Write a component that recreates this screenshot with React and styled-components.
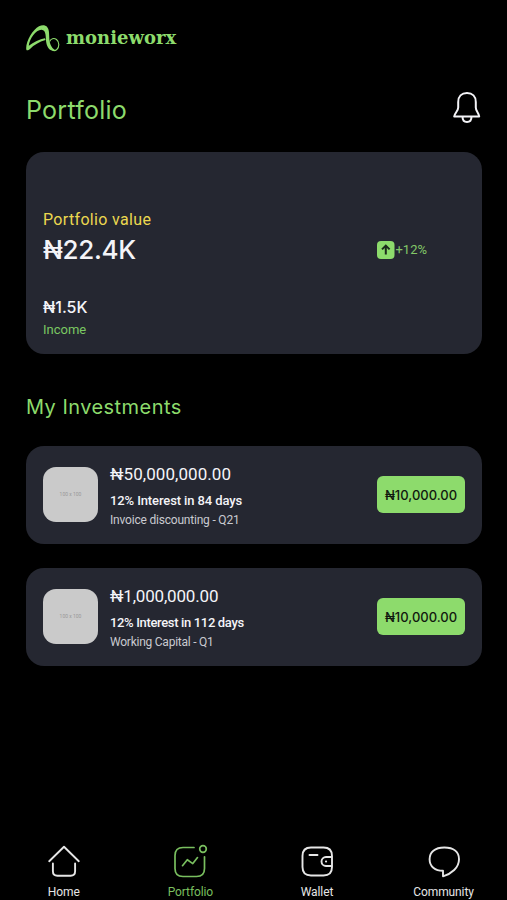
import React from "react";
import styled, { createGlobalStyle } from "styled-components";

const GREEN = "#8ddb6c";
const PANEL = "#252731";

const GlobalStyle = createGlobalStyle`
  * { box-sizing: border-box; }
  body { margin: 0; background: #000; font-family: Roboto, "Noto Sans", sans-serif; }
`;

const Screen = styled.main`
  display: flex;
  flex-direction: column;
  width: 507px;
  height: 900px;
  overflow: hidden;
  padding: 0 25px 0 26px;
  background: #000;
  color: #f4f4f8;
`;

const Text = styled.span`
  display: block;
  white-space: nowrap;
  color: ${(p) => p.$color || "inherit"};
  font-family: ${(p) => (p.$round ? 'Inter, sans-serif' : 'Roboto, "Noto Sans", sans-serif')};
  font-size: ${(p) => p.$size}px;
  font-weight: ${(p) => p.$weight || 400};
  line-height: ${(p) => p.$line}px;
  letter-spacing: ${(p) => p.$track || 0}px;
`;

const Brand = styled.header`
  display: flex;
  gap: 6px;
  height: 52px;
  padding-top: 24px;
  color: ${GREEN};
  svg { display: block; }
`;

const BrandName = styled.span`
  font: 700 18px/27px "DejaVu Serif", serif;
`;

const TitleRow = styled.div`
  display: flex;
  justify-content: space-between;
  height: 100px;
  padding-top: 38px;
`;

const Summary = styled.section`
  display: flex;
  justify-content: space-between;
  flex: none;
  height: 202px;
  padding: 57px 55px 0 17px;
  border-radius: 18px;
  background: ${PANEL};
`;

const Income = styled.div`
  padding-top: 27px;
`;

const Change = styled.div`
  display: flex;
  align-items: center;
  height: 20px;
  margin-top: 31px;
  svg { display: block; }
`;

const SectionTitle = styled.div`
  padding: 39px 0 24px;
`;

const List = styled.div`
  display: flex;
  flex-direction: column;
  gap: 24.5px;
`;

const Row = styled.article`
  display: flex;
  align-items: center;
  height: 97.5px;
  padding: 0 17px;
  border-radius: 18px;
  background: ${PANEL};
`;

const Thumb = styled.div`
  display: grid;
  place-items: center;
  width: 55px;
  height: 55px;
  margin-right: 12px;
  border-radius: 13px;
  background: #cacaca;
`;

const Details = styled.div`
  flex: 1;
  padding-bottom: 2px;
`;

const Amount = styled.button`
  display: grid;
  place-items: center;
  width: 88px;
  height: 37px;
  padding: 0;
  border: 0;
  border-radius: 6px;
  background: ${GREEN};
  color: #11180f;
`;

const Nav = styled.nav`
  display: grid;
  grid-template-columns: repeat(4, 126.6px);
  margin: auto -25px 0 -25.5px;
  height: 56px;
`;

const Tab = styled.a`
  display: flex;
  flex-direction: column;
  align-items: center;
  gap: 2px;
  color: ${(p) => (p.$active ? "#79bf5f" : "#e6e6e6")};
  svg { display: block; flex: none; }
`;

const Stroke = ({ w, h, children, sw = 1.9 }) => (
  <svg width={w} height={h} viewBox={`0 0 ${w} ${h}`} fill="none" stroke="currentColor" strokeWidth={sw} strokeLinecap="round" strokeLinejoin="round">
    {children}
  </svg>
);

const LogoMark = () => (
  <svg width="34" height="28" viewBox="0 0 34 28" fill="none">
    <path fill="currentColor" d="M.3 25.500C-.8 18.500 6.500 5.500 13 2.200C18 0 22.200 1.500 22.900 7.500C23.500 13.500 22.800 18 25.500 22.500C26.600 24.600 28.500 26 30.300 26.500C25.500 28.300 21.300 24.800 20.300 18.800C19.500 13.500 20.500 6 15.500 5.800C10 5.600 3.300 15 2.800 21.800C7.500 17.900 13.600 15 19 14.200L19.500 16C13.200 17.800 8 21 4 24.900C2.500 26.400.6 27 .3 25.500Z" />
    <path stroke="currentColor" strokeWidth="1.100" d="M23.800 17.500C24.500 14.500 28 13.700 30.500 15.500C33.600 18 33.500 23 30.800 25.500C29.500 26.700 28 26.900 26.500 26.300" />
  </svg>
);

const HomeIcon = () => (
  <Stroke w={36} h={36}>
    <path d="M3.200 17.200L18 2.800L32.800 17.200M6.900 19.500V27.300Q6.900 31.800 11.400 31.800H24.600Q29.100 31.800 29.100 27.300V19.500" />
  </Stroke>
);
const PortfolioIcon = () => (
  <Stroke w={36} h={36} sw={1.7}>
    <path d="M22 3.500H11Q3 3.500 3 11.500V24.500Q3 32.500 11 32.500H24.500Q32.500 32.500 32.500 24.500V12.800M10.500 21.700L15.300 15.700L20.800 19.600L25.500 13.600" />
    <circle cx="31" cy="5" r="3.300" />
  </Stroke>
);
const WalletIcon = () => (
  <Stroke w={36} h={36}>
    <path d="M33 13V12Q33 3.500 24.500 3.500H12Q3.500 3.500 3.500 12V23Q3.500 31.500 12 31.500H24.500Q33 31.500 33 23V22M33 13H27A4.500 4.500 0 0 0 27 22H33ZM10.500 11H18.500M26.900 17.500H27.200" />
  </Stroke>
);
const CommunityIcon = () => (
  <Stroke w={36} h={36}>
    <path d="M17 32.300V26.800C9 26.800 3.600 22.500 3.600 15.200C3.600 8.200 8.800 3.500 18.300 3.500C28 3.500 33 8.300 33 15.200C33 23.700 25.500 29.800 17 32.300Z" />
  </Stroke>
);

const BellIcon = () => (
  <Stroke w={30} h={36} sw={2}>
    <path d="M6.200 12C6.200 6.500 9.500 3 15 3S23.800 6.500 23.800 12V17.500C23.800 21 26.500 22.500 27.200 26.500H2.200C3 22.500 6.200 21 6.200 17.500ZM10.500 26.800C10.500 30.300 12.300 32 15 32S19.500 30.300 19.500 26.800" />
  </Stroke>
);

const investments = [
  { total: "₦50,000,000.00", terms: "12% Interest in 84 days", kind: "Invoice discounting - Q21", tt: 0.06, it: -0.11, kt: -0.2 },
  { total: "₦1,000,000.00", terms: "12% Interest in 112 days", kind: "Working Capital - Q1", tt: -0.18, it: -0.34, kt: -0.24 },
];

const tabs = [
  { label: "Home", Icon: HomeIcon },
  { label: "Portfolio", Icon: PortfolioIcon, active: true },
  { label: "Wallet", Icon: WalletIcon },
  { label: "Community", Icon: CommunityIcon },
];

export default function App() {
  return (
    <>
      <GlobalStyle />
      <Screen>
        <Brand>
          <LogoMark />
          <BrandName>monieworx</BrandName>
        </Brand>
        <TitleRow>
          <Text $round $size={25} $line={40} $track={0.25} $color={GREEN}>Portfolio</Text>
          <BellIcon />
        </TitleRow>
        <Summary>
          <div>
            <Text $size={16} $line={22} $track={0.33} $color="#ecd84f">Portfolio value</Text>
            <Text $round $size={26} $line={38} $weight={500} $track={-0.35}>₦22.4K</Text>
            <Income>
              <Text $round $size={16} $line={22} $weight={500}>₦1.5K</Text>
              <Text $size={13} $line={24} $color="#7bc862">Income</Text>
            </Income>
          </div>
          <Change>
            <svg width="18" height="18" viewBox="0 0 18 18" fill="none">
              <rect width="17.500" height="18" rx="4" fill={GREEN} />
              <path d="M8.800 13.500V5M5 8.400L8.800 4.600L12.600 8.400" stroke="#1c2a1c" strokeWidth="2" />
            </svg>
            <Text $size={13} $line={20} $color="#83c868">+12%</Text>
          </Change>
        </Summary>
        <SectionTitle>
          <Text $round $size={20} $line={29} $track={0.45} $color={GREEN}>My Investments</Text>
        </SectionTitle>
        <List>
          {investments.map((item) => (
            <Row key={item.total}>
              <Thumb><Text $size={5} $line={7} $color="#999">100 x 100</Text></Thumb>
              <Details>
                <Text $size={17} $line={28} $track={item.tt}>{item.total}</Text>
                <Text $size={13} $line={25} $weight={500} $track={item.it}>{item.terms}</Text>
                <Text $size={12} $line={14} $color="#c9cad0" $track={item.kt}>{item.kind}</Text>
              </Details>
              <Amount><Text $round $size={13} $line={20} $weight={500}>₦10,000.00</Text></Amount>
            </Row>
          ))}
        </List>
        <Nav>
          {tabs.map(({ label, Icon, active }) => (
            <Tab key={label} $active={active}>
              <Icon />
              <Text $size={12} $line={20} $track={-0.1}>{label}</Text>
            </Tab>
          ))}
        </Nav>
      </Screen>
    </>
  );
}
